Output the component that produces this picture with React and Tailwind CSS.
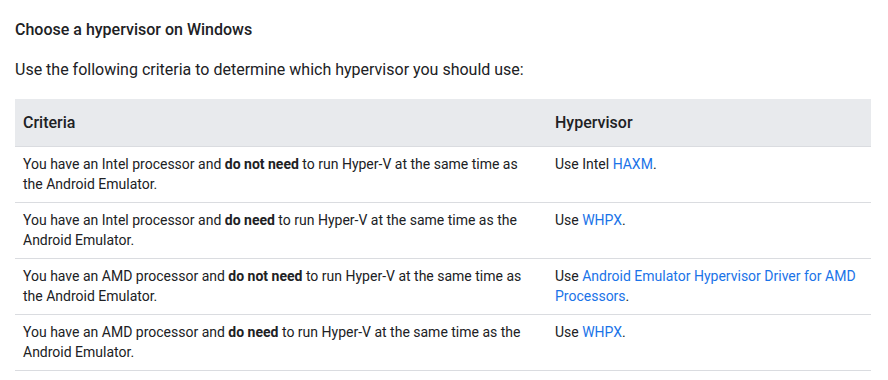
export default function App() {
  const rows = [
    {
      c: <>You have an Intel processor and <b className="font-bold">do not need</b> to run Hyper-V at the same time as the Android Emulator.</>,
      h: <>Use Intel <a className="text-[#1a73e8]">HAXM</a>.</>,
    },
    {
      c: <>You have an Intel processor and <b className="font-bold">do need</b> to run Hyper-V at the same time as the Android Emulator.</>,
      h: <>Use <a className="text-[#1a73e8]">WHPX</a>.</>,
    },
    {
      c: <>You have an AMD processor and <b className="font-bold">do not need</b> to run Hyper-V at the same time as the Android Emulator.</>,
      h: <>Use <a className="text-[#1a73e8]">Android Emulator Hypervisor Driver for AMD Processors</a>.</>,
    },
    {
      c: <>You have an AMD processor and <b className="font-bold">do need</b> to run Hyper-V at the same time as the Android Emulator.</>,
      h: <>Use <a className="text-[#1a73e8]">WHPX</a>.</>,
    },
  ];
  return (
    <div className="w-[888px] h-[380px] bg-white text-[#202124] font-['Roboto',sans-serif] overflow-hidden">
      <div className="pl-[15px] pr-[17px] pt-[20px]">
        <h2 className="text-[16px] leading-[20px] font-medium">Choose a hypervisor on Windows</h2>
        <p className="mt-[18px] text-[16px] leading-[24px]">Use the following criteria to determine which hypervisor you should use:</p>
        <div className="mt-[17px] w-[856px]">
          <div className="flex bg-[#e8eaed] border-b border-[#dadce0] text-[16px] font-medium leading-[20px]">
            <div className="w-[532px] px-[8px] pt-[14px] pb-[13px]">Criteria</div>
            <div className="flex-1 px-[8px] pt-[14px] pb-[13px]">Hypervisor</div>
          </div>
          {rows.map((r, i) => (
            <div key={i} className="flex border-b border-[#dadce0] text-[14px] leading-[20px]">
              <div className="w-[532px] px-[8px] pt-[7px] pb-[8px]">{r.c}</div>
              <div className="flex-1 px-[8px] pt-[7px] pb-[8px]">{r.h}</div>
            </div>
          ))}
        </div>
      </div>
    </div>
  );
}
